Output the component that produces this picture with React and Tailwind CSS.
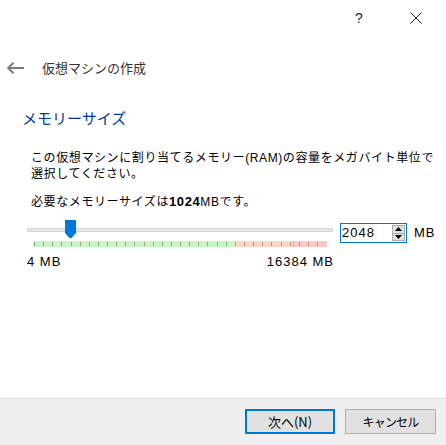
function TickBand() {
  var ticks = [];
  for (var i = 0; i < 32; i++) {
    ticks.push(1 + Math.round(i * 9.13));
  }
  return (
    <svg width="294" height="6" viewBox="0 0 294 6" className="block">
      <rect x="0" y="0" width="203" height="6" fill="#c6f7c3" />
      <rect x="203" y="0" width="57" height="6" fill="#ffd6c2" />
      <rect x="260" y="0" width="34" height="6" fill="#ffc6c6" />
      <rect x="260" y="0" width="1" height="6" fill="#e0a0a0" />
      {ticks.map(function(x) {
        return <rect key={x} x={x} y="1" width="1" height="4" fill="#a09a8c" />;
      })}
    </svg>
  );
}

function Thumb() {
  return (
    <svg width="11" height="18" viewBox="0 0 11 18" className="block">
      <path d="M0 0 H11 V13 L6.5 18 H4.5 L0 13 Z" fill="#0078d7" />
    </svg>
  );
}

function SpinButtons() {
  return (
    <div className="w-[13px] h-[16px] mr-[1px] bg-[#e1e1e1] border border-[#adadad] flex flex-col">
      <div className="flex-1 flex items-center justify-center border-b border-[#adadad]">
        <svg width="7" height="4" viewBox="0 0 7 4"><path d="M3.5 0 L7 4 H0 Z" fill="#000" /></svg>
      </div>
      <div className="flex-1 flex items-center justify-center">
        <svg width="7" height="4" viewBox="0 0 7 4"><path d="M0 0 H7 L3.5 4 Z" fill="#000" /></svg>
      </div>
    </div>
  );
}

export default function App() {
  var ui_font = { fontFamily: '"Noto Sans CJK JP", sans-serif' };
  var body_font = { fontFamily: '"Liberation Sans", "Noto Sans CJK JP", sans-serif' };

  return (
    <div className="w-[446px] h-[445px] bg-white flex flex-col text-black overflow-hidden" style={ui_font}>
      {/* top bar */}
      <div className="h-[36px] flex items-center justify-end pr-[7px] gap-[11px] text-[#222]">
        <div className="w-[46px] h-[36px] flex items-center justify-center text-[14px]" style={body_font}>?</div>
        <div className="w-[46px] h-[36px] flex items-center justify-center">
          <svg width="12" height="12" viewBox="0 0 12 12">
            <path d="M0.5 0.5 L11.5 11.5 M11.5 0.5 L0.5 11.5" stroke="#222" strokeWidth="1" />
          </svg>
        </div>
      </div>

      {/* header */}
      <div className="mt-[20px] h-[24px] flex items-center pl-[7px]">
        <svg width="17" height="12" viewBox="0 0 17 12">
          <path d="M1 6 H17 M6.5 0.8 L1.2 6 L6.5 11.2" stroke="#7a7a7a" strokeWidth="2" fill="none" />
        </svg>
        <div className="ml-[18px] text-[13px] leading-[24px] text-[#333]">仮想マシンの作成</div>
      </div>

      {/* content */}
      <div className="flex-1 flex flex-col">
        <div className="mt-[28px] ml-[22px] text-[15px] leading-[20px] text-[#0035a8]">メモリーサイズ</div>

        <div className="mt-[22px] ml-[31px] text-[12px] leading-[16px] tracking-[0.6px]" style={body_font}>
          この仮想マシンに割り当てるメモリー(RAM)の容量をメガバイト単位で<br />選択してください。
        </div>

        <div className="mt-[12px] ml-[31px] text-[12px] leading-[16px] tracking-[0.6px]" style={body_font}>
          必要なメモリーサイズは<span className="font-bold text-[13px]">1024</span>MBです。
        </div>

        <div className="mt-[10px] ml-[27px] flex items-start">
          <div className="w-[306px] flex flex-col">
            <div className="relative h-[18px]">
              <div className="mt-[8px] h-[4px] bg-[#e7e7e7] border border-[#d6d6d6]"></div>
              <div className="absolute left-[38px] top-0">
                <Thumb />
              </div>
            </div>
            <div className="mt-[3px] ml-[6px]">
              <TickBand />
            </div>
            <div className="mt-[7px] flex justify-between text-[13px] leading-[16px] tracking-[1px]" style={body_font}>
              <span>4&nbsp;MB</span>
              <span className="-mr-[1px]">16384 MB</span>
            </div>
          </div>

          <div className="ml-[7px] mt-[3px] w-[67px] h-[20px] border border-[#0078d7] flex items-center" style={body_font}>
            <div className="flex-1 pl-[1px] text-[13px] leading-[16px] tracking-[1px]">2048</div>
            <SpinButtons />
          </div>
          <div className="ml-[7px] mt-[5px] text-[13px] leading-[16px] tracking-[1px]" style={body_font}>MB</div>
        </div>
      </div>

      {/* footer */}
      <div className="h-[47px] border-t border-[#dcdcdc] bg-[#f0f0f0] flex justify-end items-start pt-[10px] pr-[10px] gap-[10px]">
        <button className="w-[90px] h-[25px] border-2 border-[#0078d7] bg-[#e1e1e1] text-[13px] flex items-center justify-center">
          次へ(N)
        </button>
        <button className="w-[91px] h-[25px] border border-[#adadad] bg-[#e1e1e1] text-[12px] tracking-[-0.8px] flex items-center justify-center">
          キャンセル
        </button>
      </div>
    </div>
  );
}
